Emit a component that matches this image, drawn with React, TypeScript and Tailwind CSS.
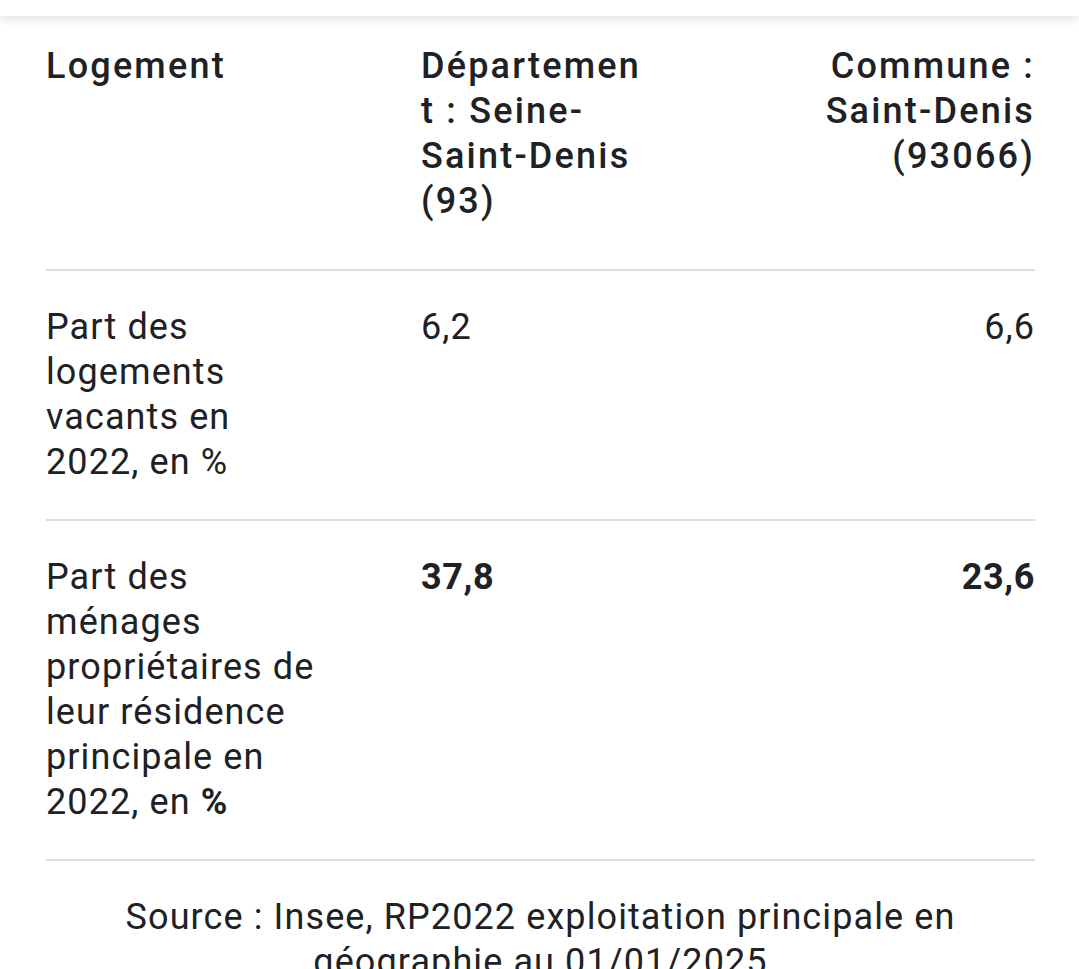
import React from "react";

type Row = {
  label: React.ReactNode;
  dep: string;
  com: string;
  bold?: boolean;
};

const rows: Row[] = [
  { label: "Part des logements vacants en 2022, en %", dep: "6,2", com: "6,6" },
  {
    label: (
      <>
        Part des ménages propriétaires de leur résidence principale en 2022, en <b className="font-bold">%</b>
      </>
    ),
    dep: "37,8",
    com: "23,6",
    bold: true,
  },
];

const grid = "grid grid-cols-[284px_228px_1fr] gap-x-[91px]";

export default function App() {
  return (
    <div className="min-h-screen bg-white text-[#202124] font-['Roboto',sans-serif] text-[36px] leading-[45px] tracking-[1.1px] overflow-hidden">
      <div className="h-4 bg-white shadow-[0_3px_10px_rgba(0,0,0,0.12)]" />
      <div className="pl-[46px] pr-[44px]">
        <div className={`${grid} pt-[28px] pb-[45px] border-b-2 border-[#dcdcdc] font-medium tracking-[2.2px]`}>
          <div>Logement</div>
          <div className="break-words">Département : Seine-Saint-Denis (93)</div>
          <div className="text-right">Commune : Saint-Denis (93066)</div>
        </div>
        {rows.map((r, i) => (
          <div key={i} className={`${grid} py-[34px] border-b-2 border-[#dcdcdc]`}>
            <div>{r.label}</div>
            <div className={r.bold ? "font-bold tracking-[0.6px]" : ""}>{r.dep}</div>
            <div className={`text-right ${r.bold ? "font-bold tracking-[0.6px]" : ""}`}>{r.com}</div>
          </div>
        ))}
        <p className="mt-[34px] text-center px-[40px]">
          Source : Insee, RP2022 exploitation principale en géographie au 01/01/2025
        </p>
      </div>
    </div>
  );
}
